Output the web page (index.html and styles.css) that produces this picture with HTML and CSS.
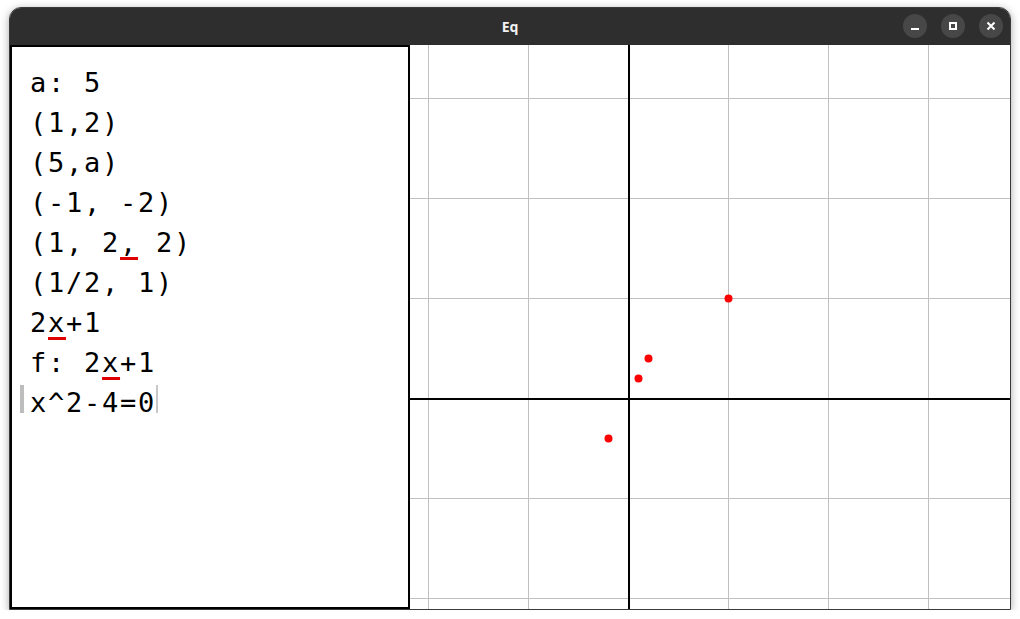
FILE: index.html
```html
<!DOCTYPE html>
<html lang="en">
<head>
    <meta charset="UTF-8">
    <title>Eq</title>
    <link rel="stylesheet" href="styles.css">
</head>
<body>
    <div class="window">
        <div class="titlebar">
            <span class="title">Eq</span>
            <div class="controls">
                <button class="ctl" aria-label="Minimize">
                    <svg width="10" height="10" viewBox="0 0 10 10"><rect x="1" y="7" width="8" height="2" fill="#fff"/></svg>
                </button>
                <button class="ctl" aria-label="Maximize">
                    <svg width="10" height="10" viewBox="0 0 10 10"><rect x="2" y="2" width="6" height="6" fill="none" stroke="#fff" stroke-width="2"/></svg>
                </button>
                <button class="ctl" aria-label="Close">
                    <svg width="10" height="10" viewBox="0 0 10 10"><path d="M1.5 1.5 L8.5 8.5 M8.5 1.5 L1.5 8.5" stroke="#fff" stroke-width="2"/></svg>
                </button>
            </div>
        </div>

        <div class="content">
            <div class="editor">
                <div class="line">a: 5</div>
                <div class="line">(1,2)</div>
                <div class="line">(5,a)</div>
                <div class="line">(-1, -2)</div>
                <div class="line">(1, 2<span class="err">,</span> 2)</div>
                <div class="line">(1/2, 1)</div>
                <div class="line">2<span class="err">x</span>+1</div>
                <div class="line">f: 2<span class="err">x</span>+1</div>
                <div class="line"><span class="bar"></span>x^2-4=0<span class="cursor"></span></div>
            </div>

            <div class="plot">
                <svg width="600" height="564" viewBox="0 0 600 564">
                    <!-- grid, 100px = 5 units -->
                    <g stroke="#c0c0c0" stroke-width="1">
                        <line x1="18.5" y1="0" x2="18.5" y2="564"/>
                        <line x1="118.5" y1="0" x2="118.5" y2="564"/>
                        <line x1="318.5" y1="0" x2="318.5" y2="564"/>
                        <line x1="418.5" y1="0" x2="418.5" y2="564"/>
                        <line x1="518.5" y1="0" x2="518.5" y2="564"/>
                        <line x1="0" y1="53.5" x2="600" y2="53.5"/>
                        <line x1="0" y1="153.5" x2="600" y2="153.5"/>
                        <line x1="0" y1="253.5" x2="600" y2="253.5"/>
                        <line x1="0" y1="453.5" x2="600" y2="453.5"/>
                        <line x1="0" y1="553.5" x2="600" y2="553.5"/>
                    </g>
                    <!-- axes -->
                    <rect x="218" y="0" width="2" height="564" fill="#000"/>
                    <rect x="0" y="353" width="600" height="2" fill="#000"/>
                    <!-- points -->
                    <g fill="#ff0000">
                        <circle cx="318.5" cy="253.5" r="4"/>
                        <circle cx="238.5" cy="313.5" r="4"/>
                        <circle cx="228.5" cy="333.5" r="4"/>
                        <circle cx="198.5" cy="393.5" r="4"/>
                    </g>
                </svg>
            </div>
        </div>
    </div>
</body>
</html>
```

FILE: styles.css
```css
body {
    margin: 0;
    padding: 7px 0 0 9px;
    background: #ffffff;
    font-family: "Noto Sans", "DejaVu Sans", sans-serif;
}

.window {
    width: 1000px;
    height: 601px;
    border: 1px solid #3a3a3a;
    border-radius: 12px 12px 0 0;
    overflow: hidden;
    background: #fff;
    box-shadow: 0 2px 9px rgba(0, 0, 0, 0.35);
    display: flex;
    flex-direction: column;
}

.titlebar {
    height: 37px;
    flex: none;
    background: #2e2e2e;
    display: flex;
    align-items: center;
    justify-content: center;
    position: relative;
}

.title {
    color: #f2f2f2;
    font-size: 14px;
    font-weight: bold;
}

.controls {
    position: absolute;
    right: 7px;
    top: 6px;
    display: flex;
    gap: 14px;
}

.ctl {
    width: 24px;
    height: 24px;
    padding: 0;
    border: none;
    border-radius: 50%;
    background: #474747;
    display: flex;
    align-items: center;
    justify-content: center;
}

.content {
    flex: 1;
    display: flex;
}

.editor {
    width: 378px;
    border: 2px solid #000;
    padding: 16px 0 0 18px;
    font-family: "DejaVu Sans Mono", monospace;
    font-size: 27px;
    letter-spacing: 1.75px;
    line-height: 40px;
    color: #000;
}

.line {
    white-space: pre;
    height: 40px;
}

.err {
    text-decoration: underline;
    text-decoration-color: #e00000;
    text-decoration-thickness: 3px;
    text-underline-offset: 5px;
    text-decoration-skip-ink: none;
}

.bar {
    display: inline-block;
    width: 4px;
    height: 28px;
    margin-left: -10px;
    margin-right: 6px;
    background: #bdbdbd;
    vertical-align: -1px;
}

.cursor {
    display: inline-block;
    width: 2px;
    height: 28px;
    margin-left: 0;
    background: #c8c8c8;
    vertical-align: -1px;
}

.plot {
    flex: 1;
    overflow: hidden;
}

.plot svg {
    display: block;
}
```
